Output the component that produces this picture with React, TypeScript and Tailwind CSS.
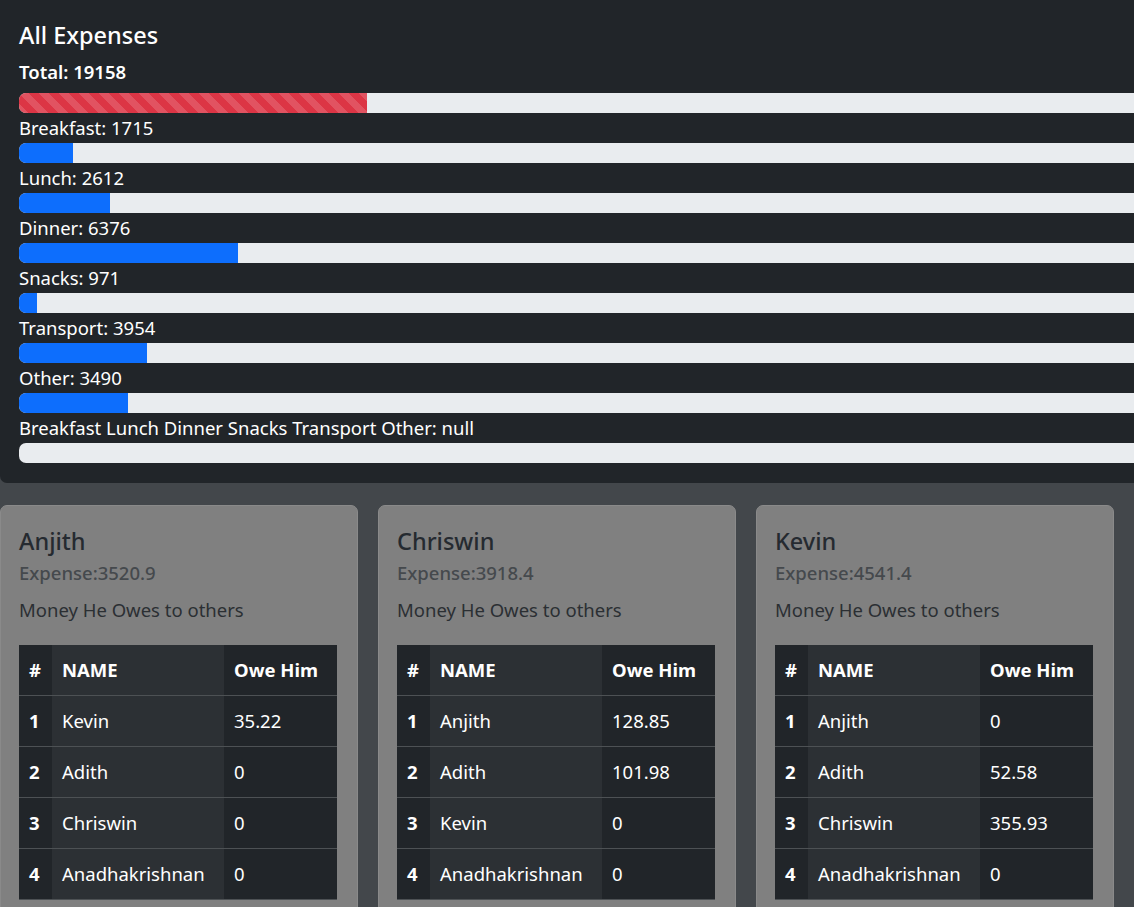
const categories = [
  { label: 'Breakfast: 1715', width: 54 },
  { label: 'Lunch: 2612', width: 91 },
  { label: 'Dinner: 6376', width: 219 },
  { label: 'Snacks: 971', width: 18 },
  { label: 'Transport: 3954', width: 128 },
  { label: 'Other: 3490', width: 109 },
  { label: 'Breakfast Lunch Dinner Snacks Transport Other: null', width: 0 },
];

const people = [
  {
    name: 'Anjith',
    expense: '3520.9',
    owes: [
      ['Kevin', '35.22'],
      ['Adith', '0'],
      ['Chriswin', '0'],
      ['Anadhakrishnan', '0'],
    ],
  },
  {
    name: 'Chriswin',
    expense: '3918.4',
    owes: [
      ['Anjith', '128.85'],
      ['Adith', '101.98'],
      ['Kevin', '0'],
      ['Anadhakrishnan', '0'],
    ],
  },
  {
    name: 'Kevin',
    expense: '4541.4',
    owes: [
      ['Anjith', '0'],
      ['Adith', '52.58'],
      ['Chriswin', '355.93'],
      ['Anadhakrishnan', '0'],
    ],
  },
];

function Bar({ width }: { width: number }) {
  return (
    <div className="flex h-5 w-full overflow-hidden rounded-l-[7px] bg-[#e9ecef]">
      {width > 0 && <div className="h-full bg-[#0d6efd]" style={{ width }} />}
    </div>
  );
}

function PersonCard({ person }: { person: (typeof people)[number] }) {
  return (
    <div className="h-[420px] rounded-[7px] border border-[#8a8a8a] bg-[#808080] pt-5 pr-5 pl-[18px]">
      <h5 className="text-[23.5px] font-medium leading-[30px] text-[#252a30]">{person.name}</h5>
      <h6 className="mt-[5px] text-[18.5px] font-medium leading-6 text-[#45494d]">Expense:{person.expense}</h6>
      <p className="mt-[10px] mb-5 text-[18.5px] leading-[30px] text-[#2b2f33]">Money He Owes to others</p>
      <table className="w-full border-collapse text-[18.5px] leading-[30px] text-white">
        <thead>
          <tr className="border-b border-[#4d5154]">
            <th className="w-[33px] bg-[#212529] px-[10px] py-[10px] text-left font-bold">#</th>
            <th className="w-[172px] bg-[#2c3034] px-[10px] py-[10px] text-left font-bold">NAME</th>
            <th className="bg-[#212529] px-[10px] py-[10px] text-left font-bold">Owe Him</th>
          </tr>
        </thead>
        <tbody>
          {person.owes.map(([who, amt], i) => (
            <tr key={i} className="border-b border-[#4d5154]">
              <th className="bg-[#212529] px-[10px] py-[10px] text-left font-bold">{i + 1}</th>
              <td className="bg-[#2c3034] px-[10px] py-[10px]">{who}</td>
              <td className="bg-[#212529] px-[10px] py-[10px]">{amt}</td>
            </tr>
          ))}
        </tbody>
      </table>
    </div>
  );
}

export default function App() {
  return (
    <div className="h-[907px] w-[1134px] overflow-hidden bg-[#43474b] font-['Noto_Sans',sans-serif]">
      <div className="w-[1160px] rounded-b-[7px] bg-[#212529] px-[19px] pt-5 pb-5 text-white">
        <h5 className="text-[23.5px] font-medium leading-[30px]">All Expenses</h5>
        <h6 className="mt-[10px] mb-[9px] text-[18.5px] font-semibold leading-6">Total: 19158</h6>
        <div className="flex h-5 w-full overflow-hidden rounded-l-[7px] bg-[#e9ecef]">
          <div className="h-full w-[348px] bg-[#dc3545] bg-[linear-gradient(45deg,rgba(255,255,255,0.15)_25%,transparent_25%,transparent_50%,rgba(255,255,255,0.15)_50%,rgba(255,255,255,0.15)_75%,transparent_75%,transparent)] bg-[length:20px_20px]" />
        </div>
        {categories.map((c) => (
          <div key={c.label}>
            <div className="text-[18.5px] leading-[30px]">{c.label}</div>
            <Bar width={c.width} />
          </div>
        ))}
      </div>
      <div className="mt-[22px] grid grid-cols-3 gap-x-5 pr-5">
        {people.map((p) => (
          <PersonCard key={p.name} person={p} />
        ))}
      </div>
    </div>
  );
}
